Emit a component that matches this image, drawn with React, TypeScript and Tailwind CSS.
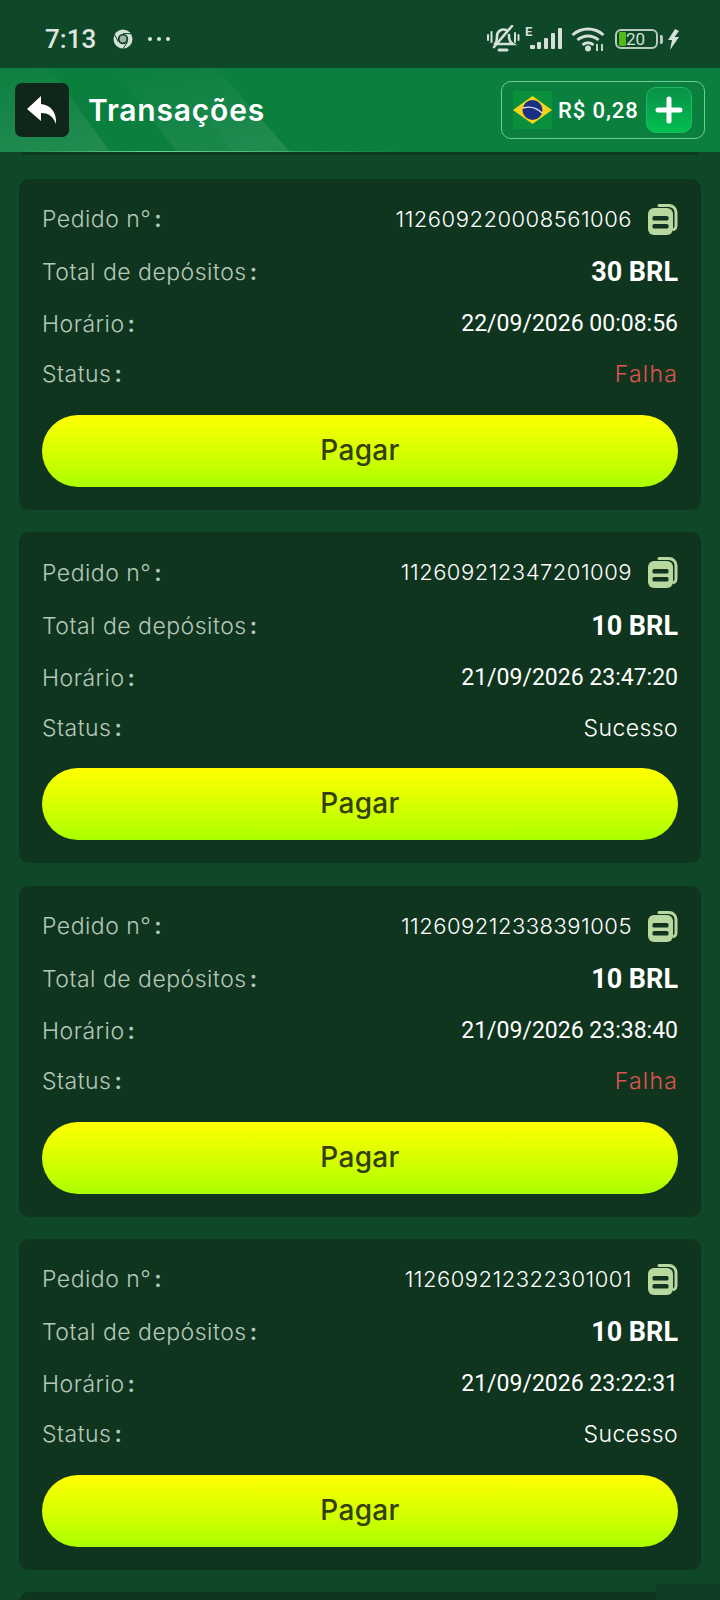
const montserrat = "[font-family:Inter,'Noto_Sans',sans-serif]";

type Order = { id: string; total: string; time: string; status: string };

const orders: Order[] = [
  { id: '112609220008561006', total: '30 BRL', time: '22/09/2026 00:08:56', status: 'Falha' },
  { id: '112609212347201009', total: '10 BRL', time: '21/09/2026 23:47:20', status: 'Sucesso' },
  { id: '112609212338391005', total: '10 BRL', time: '21/09/2026 23:38:40', status: 'Falha' },
  { id: '112609212322301001', total: '10 BRL', time: '21/09/2026 23:22:31', status: 'Sucesso' },
];

function ChromeIcon() {
  return (
    <svg width="20" height="20" viewBox="0 0 20 20" fill="none">
      <circle cx="10" cy="10" r="9.5" fill="#d5e0d9" />
      <circle cx="10" cy="10" r="5.2" fill="#0f4828" />
      <circle cx="10" cy="10" r="3.4" fill="#9fb3a7" />
      <path d="M10 4.6h8.4M5.4 12.8 1.6 5.600M14.6 12.8l-4.4 6.800" stroke="#0f4828" strokeWidth="1" />
    </svg>
  );
}

function StatusIcons() {
  return (
    <div className="flex items-center text-[#d5e0d9]">
      <svg width="34" height="28" viewBox="0 0 34 28" fill="none" stroke="currentColor" strokeWidth="2.6" strokeLinecap="round" className="mr-[5px]">
        <path d="M9 19c2-2 2-5 2-8a6.500 6.500 0 0 1 9-6M23 10v2c0 3 1 5 4 7H9" />
        <path d="M13 25h8" strokeWidth="3" />
        <path d="M26 1 8 22" />
        <path d="M2 10v5M5.500 7v10M29 8v9M32.500 10v5" strokeWidth="2" />
      </svg>
      <div className="relative w-[37px] h-[26px] mr-[9px]">
        <span className="absolute left-0 top-[-1px] font-['Roboto',sans-serif] text-[13px] font-bold leading-[13px]">E</span>
        <svg width="37" height="26" viewBox="0 0 37 26" fill="currentColor">
          <rect x="5" y="19" width="5" height="4" rx="1" />
          <rect x="12" y="16" width="4" height="7" rx="1" />
          <rect x="19" y="12" width="4" height="11" rx="1" />
          <rect x="26" y="7" width="4" height="16" rx="1" />
          <rect x="33" y="2" width="4" height="21" rx="1" />
        </svg>
      </div>
      <svg width="34" height="26" viewBox="0 0 34 26" fill="none" stroke="currentColor" strokeWidth="3" className="mr-[10px]">
        <path d="M1.500 9c9-8 22-8 31 0" />
        <path d="M6.500 14c6-5.500 15-5.500 21 0" />
        <path d="M11.500 19c3-3 8-3 11 0" />
        <circle cx="17" cy="22.500" r="1.500" fill="currentColor" />
        <path d="M26 18v7M31 18v7" strokeWidth="1.800" />
      </svg>
      <div className="w-[43px] h-[20px] rounded-[6px] border-2 border-[#b9c9bf] flex items-center pl-[2px]">
        <div className="w-[7px] h-[14px] bg-[#52b81a] rounded-[1px]" />
        <span className="font-['Roboto',sans-serif] text-[17px] leading-none">20</span>
      </div>
      <div className="w-[3px] h-[9px] bg-[#b9c9bf] rounded-r-[2px] ml-[2px] mr-[4px]" />
      <svg width="13" height="21" viewBox="0 0 13 21" fill="currentColor">
        <path d="M8 0 1 11h4l-2 10 9-13H7.500L12 2z" />
      </svg>
    </div>
  );
}

function BrazilFlag() {
  return (
    <svg width="39" height="38" viewBox="0 0 39 38">
      <rect width="39" height="38" fill="#0a8f3c" />
      <polygon points="19.500,5 39,19 19.500,33 0,19" fill="#f7d417" />
      <circle cx="19.500" cy="19" r="10" fill="#1a2f86" />
      <path d="M10 17c7-2 14 0 19 5" stroke="#dfe6f2" strokeWidth="1.400" fill="none" />
    </svg>
  );
}

function CopyIcon() {
  return (
    <svg width="30" height="31" viewBox="0 0 30 31" fill="none" className="ml-[16px]">
      <path d="M11 1.500h10a7 7 0 0 1 7 7V22a4 4 0 0 1-2 3.500" stroke="#b9d8a0" strokeWidth="3" strokeLinecap="round" />
      <rect x="0" y="4" width="25" height="27" rx="6" fill="#b9d8a0" />
      <rect x="4.500" y="12" width="16" height="4.500" rx="1.500" fill="#10351f" />
      <rect x="4.500" y="20" width="16" height="4.500" rx="1.500" fill="#10351f" />
    </svg>
  );
}

function Label({ text }: { text: string }) {
  return (
    <span className={`${montserrat} text-[23px] font-light text-[#b4c8ba] tracking-[0.5px]`}>
      {text}
      <span className="ml-[3px] font-semibold">:</span>
    </span>
  );
}

function OrderCard({ order }: { order: Order }) {
  return (
    <div className="bg-[#10351f] rounded-[10px] px-[23px] pt-[14px] pb-[23px]">
      <div className="h-[53px] flex items-center justify-between">
        <Label text="Pedido n°" />
        <div className="flex items-center">
          <span className={`${montserrat} text-[22px] font-light text-white tracking-[0.5px]`}>{order.id}</span>
          <CopyIcon />
        </div>
      </div>
      <div className="h-[53px] flex items-center justify-between">
        <Label text="Total de depósitos" />
        <span className="font-['Roboto',sans-serif] font-bold text-[27px] text-white">{order.total}</span>
      </div>
      <div className="h-[51px] flex items-center justify-between">
        <Label text="Horário" />
        <span className="font-['Roboto',sans-serif] text-[23px] text-white">{order.time}</span>
      </div>
      <div className="h-[49px] flex items-center justify-between">
        <Label text="Status" />
        {order.status === 'Falha' ? (
          <span className={`${montserrat} text-[23px] font-light tracking-[1.2px] text-[#e0534f]`}>{order.status}</span>
        ) : (
          <span className={`${montserrat} text-[23px] font-light tracking-[0.4px] text-white`}>{order.status}</span>
        )}
      </div>
      <button className={`${montserrat} mt-[16px] w-full h-[72px] pb-[2px] rounded-full bg-gradient-to-b from-[#ffff00] to-[#aaff00] text-[28px] font-[550] tracking-[0.3px] text-[#33400c]`}>
        Pagar
      </button>
    </div>
  );
}

export default function App() {
  return (
    <div className="relative w-[720px] h-[1600px] overflow-hidden bg-[#0f4828]">
      {/* Status bar */}
      <div className="h-[68px] flex items-center justify-between pl-[45px] pr-[40px] pt-[10px]">
        <div className="flex items-center">
          <span className="font-['Roboto',sans-serif] text-[26px] font-medium text-[#dbe6df]">7:13</span>
          <span className="ml-[17px]"><ChromeIcon /></span>
          <div className="flex gap-[5px] ml-[15px]">
            <span className="w-[4px] h-[4px] rounded-full bg-[#dbe6df]" />
            <span className="w-[4px] h-[4px] rounded-full bg-[#dbe6df]" />
            <span className="w-[4px] h-[4px] rounded-full bg-[#dbe6df]" />
          </div>
        </div>
        <StatusIcons />
      </div>

      {/* Header */}
      <div className="relative h-[84px] bg-[#0a7f3e] flex items-center justify-between pl-[15px] pr-[15px] overflow-hidden">
        <svg className="absolute left-0 top-0" width="400" height="84" viewBox="0 0 400 84">
          <defs>
            <linearGradient id="stripe" x1="0" y1="0" x2="0.25" y2="1">
              <stop offset="0" stopColor="#ffffff" stopOpacity="0.01" />
              <stop offset="1" stopColor="#ffffff" stopOpacity="0.09" />
            </linearGradient>
            <linearGradient id="edge" x1="0" y1="0" x2="1" y2="0">
              <stop offset="0" stopColor="#6fd69a" stopOpacity="0" />
              <stop offset="0.35" stopColor="#6fd69a" stopOpacity="1" />
              <stop offset="1" stopColor="#6fd69a" stopOpacity="0" />
            </linearGradient>
          </defs>
          <polygon points="0,0 50,0 110,84 0,84" fill="url(#stripe)" />
          <polygon points="113,0 167,0 233,84 177,84" fill="url(#stripe)" fillOpacity="0.7" />
          <polygon points="167,0 217,0 290,84 233,84" fill="url(#stripe)" />
          <rect x="20" y="83" width="380" height="1" fill="url(#edge)" />
        </svg>
        <div className="relative flex items-center">
          <div className="w-[54px] h-[54px] rounded-[7px] bg-[#10261a] flex items-center justify-center">
            <svg width="32" height="30" viewBox="0 0 32 30" fill="#ffffff">
              <path d="M15 1 1 14l14 12v-8c7 0 12 3 15 11 1-11-5-19-15-20z" />
            </svg>
          </div>
          <span className={`${montserrat} ml-[19px] text-[30px] font-semibold tracking-[0.8px] text-white`}>Transações</span>
        </div>
        <div className="relative w-[204px] h-[58px] rounded-[10px] border border-[#6fcb95] flex items-center pl-[11px]">
          <BrazilFlag />
          <span className="ml-[6px] font-['Roboto',sans-serif] text-[22px] font-medium text-white tracking-[0.9px]">R$ 0,28</span>
          <div className="ml-[7px] w-[46px] h-[46px] rounded-[10px] bg-gradient-to-b from-[#0a8f48] to-[#00c04f] border border-[#1bbd63] flex items-center justify-center">
            <svg width="28" height="28" viewBox="0 0 28 28" fill="none" stroke="#ffffff" strokeWidth="5" strokeLinecap="round">
              <path d="M14 3v22M3 14h22" />
            </svg>
          </div>
        </div>
      </div>

      {/* Bottom of the previous card */}
      <div className="h-[3px] mx-[22px] rounded-b-[4px] bg-[#0e3a20]" />

      {/* Orders */}
      <div className="mt-[24px] mx-[19px] flex flex-col gap-[22.25px]">
        {orders.map((order) => (
          <OrderCard key={order.id} order={order} />
        ))}
        <div className="h-[60px] rounded-[10px] bg-[#10351f]" />
      </div>

      {/* Corner patch */}
      <div className="absolute right-0 bottom-0 w-[64px] h-[16px] bg-[#0f3d24]" />
    </div>
  );
}
